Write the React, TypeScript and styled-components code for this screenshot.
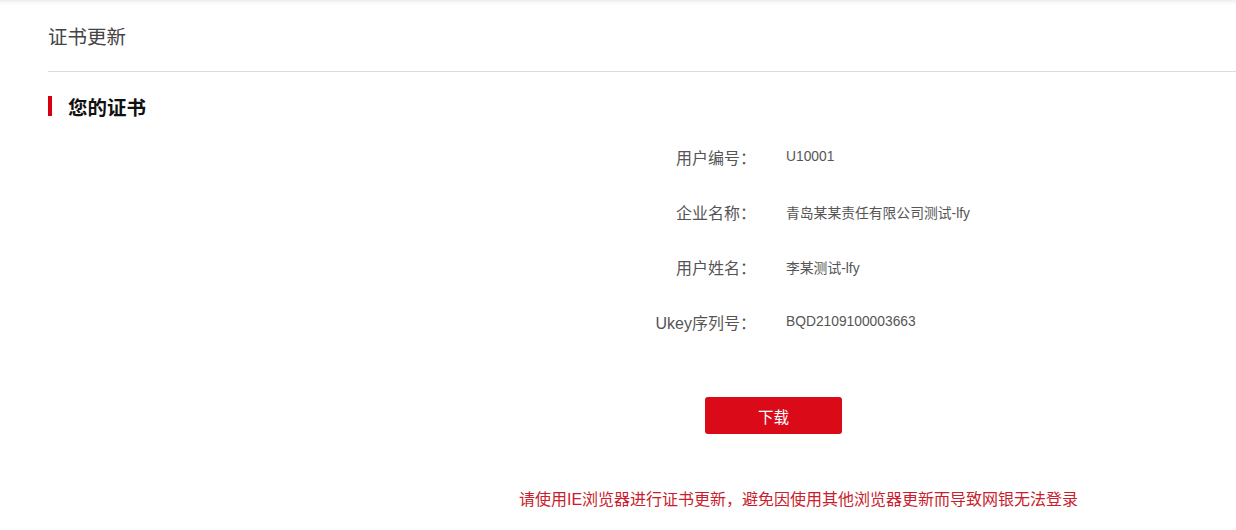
import React from 'react';
import styled, { createGlobalStyle } from 'styled-components';

const GlobalStyle = createGlobalStyle`
  html, body {
    margin: 0;
    padding: 0;
    background: #fff;
    font-family: "Liberation Sans", "Noto Sans CJK SC", sans-serif;
  }
`;

const Page = styled.div`
  width: 1236px;
  height: 530px;
  overflow: hidden;
  padding-left: 48px;
  box-sizing: border-box;
  background: linear-gradient(#ececec 0, #f7f7f7 2px, #fff 5px);
`;

const Header = styled.div`
  height: 72px;
  display: flex;
  align-items: center;
  border-bottom: 1px solid #dcdcdc;
  font-size: 19.5px;
  color: #444;
  padding-bottom: 0;
  box-sizing: border-box;
`;

const SectionTitle = styled.h2`
  margin: 24px 0 0;
  height: 20px;
  display: flex;
  align-items: center;
  font-size: 19.5px;
  font-weight: bold;
  color: #111;
  border-left: 4px solid #d7000f;
  padding-left: 16px;
`;

const InfoList = styled.div`
  margin: 13px 0 0 570px;
  display: flex;
  flex-direction: column;
`;

const Row = styled.div`
  height: 55px;
  display: flex;
  align-items: center;
  gap: 30px;
`;

const Label = styled.span`
  width: 138px;
  text-align: right;
  font-size: 16px;
  color: #555;
`;

const Value = styled.span`
  font-size: 13.8px;
  color: #555;
`;

const Actions = styled.div`
  margin: 48px 0 0 657px;
`;

const DownloadButton = styled.button`
  width: 137px;
  height: 37px;
  border: none;
  border-radius: 3px;
  background: #da0a19;
  color: #fff;
  font-family: inherit;
  font-size: 15.5px;
  cursor: pointer;
`;

const Notice = styled.p`
  margin: 54px 0 0 471px;
  font-size: 16px;
  line-height: 24px;
  color: #c81e2e;
  white-space: nowrap;
`;

const rows = [
  ['用户编号：', 'U10001'],
  ['企业名称：', '青岛某某责任有限公司测试-lfy'],
  ['用户姓名：', '李某测试-lfy'],
  ['Ukey序列号：', 'BQD2109100003663'],
];

const App = () => {
  return (
    <>
      <GlobalStyle />
      <Page>
        <Header>证书更新</Header>
        <SectionTitle>您的证书</SectionTitle>
        <InfoList>
          {rows.map(([label, value]) => (
            <Row key={label}>
              <Label>{label}</Label>
              <Value>{value}</Value>
            </Row>
          ))}
        </InfoList>
        <Actions>
          <DownloadButton>下载</DownloadButton>
        </Actions>
        <Notice>请使用IE浏览器进行证书更新，避免因使用其他浏览器更新而导致网银无法登录</Notice>
      </Page>
    </>
  );
};

export default App;
